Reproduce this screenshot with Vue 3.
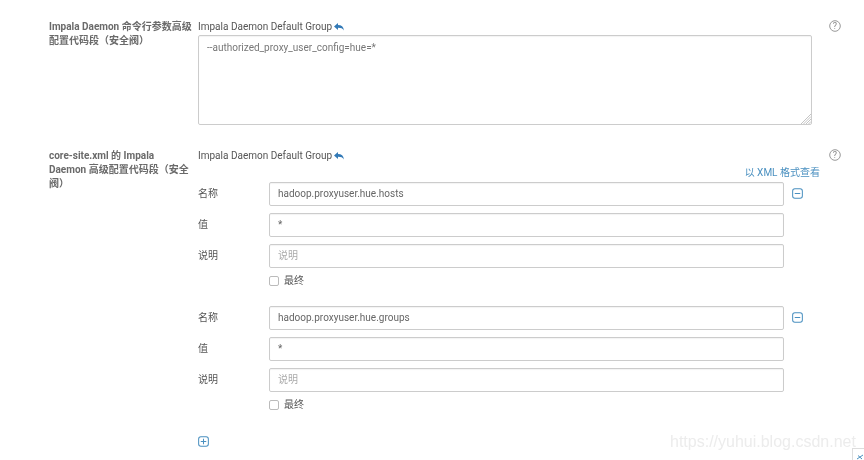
<template>
  <div class="page">
    <section class="group first">
      <div class="label">Impala Daemon 命令行参数高级配置代码段（安全阀）</div>
      <div class="main">
        <div class="scope">
          <span>Impala Daemon Default Group</span>
          <svg class="undo" viewBox="0 0 10 8"><path d="M0 3.4 4 0v2.1c3.4 0 5.6 1.700 5.900 5.300C8.800 5.300 7 4.700 4 4.700V7z" /></svg>
        </div>
        <div class="textarea">
          --authorized_proxy_user_config=hue=*
          <svg class="grip" viewBox="0 0 10 10"><path d="M10 0 0 10M10 2.500 2.500 10M10 5 5 10M10 7.500 7.500 10" /></svg>
        </div>
      </div>
      <svg class="help" viewBox="0 0 12 12"><circle cx="6" cy="6" r="5.300" /><text x="6" y="9">?</text></svg>
    </section>

    <section class="group second">
      <div class="label">core-site.xml 的 Impala Daemon 高级配置代码段（安全阀）</div>
      <div class="main">
        <div class="scope">
          <span>Impala Daemon Default Group</span>
          <svg class="undo" viewBox="0 0 10 8"><path d="M0 3.4 4 0v2.1c3.4 0 5.6 1.700 5.900 5.300C8.800 5.300 7 4.700 4 4.700V7z" /></svg>
        </div>
        <a class="xml">以 XML 格式查看</a>
        <div v-for="item in items" :key="item" class="entry">
          <div class="row">
            <span class="field-label">名称</span>
            <div class="input">{{ item }}</div>
            <svg class="square minus" viewBox="0 0 12 12"><rect x=".7" y=".7" width="10.600" height="10.600" rx="2.500" /><path d="M3 6h6" /></svg>
          </div>
          <div class="row">
            <span class="field-label">值</span>
            <div class="input">*</div>
          </div>
          <div class="row">
            <span class="field-label">说明</span>
            <div class="input placeholder">说明</div>
          </div>
          <div class="final"><i class="check"></i><span>最终</span></div>
        </div>
        <svg class="square plus" viewBox="0 0 12 12"><rect x=".7" y=".7" width="10.600" height="10.600" rx="2.500" /><path d="M3 6h6M6 3v6" /></svg>
      </div>
      <svg class="help" viewBox="0 0 12 12"><circle cx="6" cy="6" r="5.300" /><text x="6" y="9">?</text></svg>
    </section>

    <div class="watermark">https://yuhui.blog.csdn.net</div>
    <div class="corner"><svg viewBox="0 0 8 6"><path d="M1 5 7 1M2 1.500 6 5" /></svg></div>
  </div>
</template>

<script setup>
const items = ['hadoop.proxyuser.hue.hosts', 'hadoop.proxyuser.hue.groups']
</script>

<style>
html, body { margin: 0; background: #fff; overflow: hidden; }
</style>

<style scoped>
.page {
  position: relative;
  width: 864px;
  height: 460px;
  overflow: hidden;
  box-sizing: border-box;
  padding: 19px 0 0 49px;
  font: 10px/16px Roboto, "Noto Sans CJK SC", sans-serif;
  color: #555;
  filter: blur(0.35px);
}
.group { display: flex; position: relative; }
.first { height: 129px; }
.label {
  box-sizing: border-box;
  width: 143px;
  margin-right: 6px;
  padding-top: 1px;
  font-weight: 700;
  line-height: 14px;
  color: #6a6a6a;
}
.main { width: 622px; }
.scope { height: 16px; display: flex; align-items: center; gap: 2px; color: #555; white-space: nowrap; }
.undo { width: 10px; height: 8px; fill: #337ab7; }
.textarea {
  position: relative;
  box-sizing: border-box;
  width: 614px;
  height: 90px;
  border: 1px solid #ccc;
  border-radius: 2px;
  padding: 4px 8px;
  color: #777;
  box-shadow: inset 0 1px 1px rgba(0,0,0,.05);
}
.grip { position: absolute; right: 0; bottom: 0; width: 10px; height: 10px; stroke: #aaa; stroke-width: .7; }
.help { position: absolute; left: 780px; top: 1px; width: 12px; height: 12px; fill: none; stroke: #999; }
.help text { fill: #888; stroke: none; font: 9px Roboto, sans-serif; text-anchor: middle; }
.xml { display: block; height: 14px; width: 622px; margin-top: 4px; text-align: right; color: #4a90c0; line-height: 10px; font-size: 10px; }
.entry { padding-bottom: 18px; }
.row { display: flex; align-items: center; height: 24px; margin-bottom: 7px; position: relative; }
.field-label { width: 71px; color: #555; }
.input {
  box-sizing: border-box;
  width: 515px;
  height: 24px;
  border: 1px solid #ccc;
  border-radius: 2px;
  padding: 0 8px;
  line-height: 22px;
  color: #666;
  box-shadow: inset 0 1px 1px rgba(0,0,0,.05);
}
.placeholder { color: #aaa; }
.square { width: 11px; height: 11px; fill: none; stroke: #4a90c0; stroke-width: 1.1; margin-left: 8px; }
.minus { margin-bottom: 2px; }
.plus { display: block; margin: 6px 0 0; }
.final { display: flex; align-items: center; gap: 5px; padding-left: 71px; height: 14px; margin-top: -1px; }
.check { width: 8px; height: 8px; border: 1px solid #bbb; border-radius: 2px; background: #fff; }
.watermark {
  position: absolute;
  left: 670px;
  top: 431px;
  font: 16px/22px "Liberation Sans", sans-serif;
  color: #ececec;
  white-space: nowrap;
}
.corner {
  position: absolute;
  right: -2px;
  top: 448px;
  width: 12px;
  height: 14px;
  border: 1px solid #ddd;
  background: #fff;
}
.corner svg { width: 8px; height: 6px; margin: 5px 0 0 3px; fill: none; stroke: #4a90c0; display: block; }
</style>
